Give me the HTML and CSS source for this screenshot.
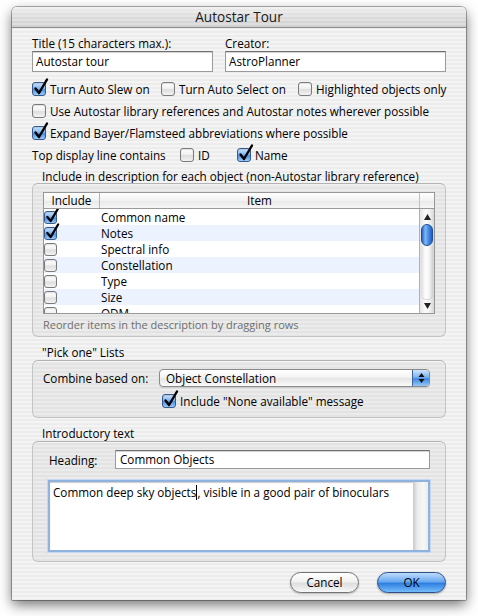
FILE: index.html
```html
<!DOCTYPE html>
<html>
<head>
<meta charset="utf-8">
<title>Autostar Tour</title>
<link rel="stylesheet" href="styles.css">
</head>
<body>
<div class="window">
  <div class="titlebar">Autostar Tour</div>
  <div class="content">
    <div class="fields">
      <div class="fcol">
        <div class="lbl">Title (15 characters max.):</div>
        <div class="textfield">Autostar tour</div>
      </div>
      <div class="fcol">
        <div class="lbl">Creator:</div>
        <div class="textfield">AstroPlanner</div>
      </div>
    </div>

    <div class="checkrow row1">
      <div class="citem"><span class="cb on"><svg class="tick" viewBox="0 0 16 18" width="16" height="18"><path d="M2.5 10.5 L6 15 L14 1.5" /></svg></span><span>Turn Auto Slew on</span></div>
      <div class="citem"><span class="cb"></span><span>Turn Auto Select on</span></div>
      <div class="citem"><span class="cb"></span><span>Highlighted objects only</span></div>
    </div>
    <div class="checkrow">
      <div class="citem"><span class="cb"></span><span>Use Autostar library references and Autostar notes wherever possible</span></div>
    </div>
    <div class="checkrow">
      <div class="citem"><span class="cb on"><svg class="tick" viewBox="0 0 16 18" width="16" height="18"><path d="M2.5 10.5 L6 15 L14 1.5" /></svg></span><span>Expand Bayer/Flamsteed abbreviations where possible</span></div>
    </div>
    <div class="checkrow row4">
      <div class="plain">Top display line contains</div>
      <div class="citem"><span class="cb"></span><span>ID</span></div>
      <div class="citem"><span class="cb on"><svg class="tick" viewBox="0 0 16 18" width="16" height="18"><path d="M2.5 10.5 L6 15 L14 1.5" /></svg></span><span>Name</span></div>
    </div>

    <div class="glabel first">Include in description for each object (non-Autostar library reference)</div>
    <div class="group g1">
      <div class="table">
        <div class="thead">
          <div class="th inc">Include</div>
          <div class="th item">Item</div>
          <div class="th corner"></div>
        </div>
        <div class="tbody">
          <div class="rows">
            <div class="tr"><span class="cell-cb"><span class="cb sm on"><svg class="tick" viewBox="0 0 16 18" width="15" height="17"><path d="M2.5 10.5 L6 15 L14 1.5" /></svg></span></span><span class="cell-txt">Common name</span></div>
            <div class="tr alt"><span class="cell-cb"><span class="cb sm on"><svg class="tick" viewBox="0 0 16 18" width="15" height="17"><path d="M2.5 10.5 L6 15 L14 1.5" /></svg></span></span><span class="cell-txt">Notes</span></div>
            <div class="tr"><span class="cell-cb"><span class="cb sm"></span></span><span class="cell-txt">Spectral info</span></div>
            <div class="tr alt"><span class="cell-cb"><span class="cb sm"></span></span><span class="cell-txt">Constellation</span></div>
            <div class="tr"><span class="cell-cb"><span class="cb sm"></span></span><span class="cell-txt">Type</span></div>
            <div class="tr alt"><span class="cell-cb"><span class="cb sm"></span></span><span class="cell-txt">Size</span></div>
            <div class="tr"><span class="cell-cb"><span class="cb sm"></span></span><span class="cell-txt">ODM</span></div>
          </div>
          <div class="vscroll">
            <div class="arrow up"><svg viewBox="0 0 7 6" width="7" height="6"><path d="M3.5 0 L7 6 L0 6 Z"/></svg></div>
            <div class="thumb"></div>
            <div class="track"></div>
            <div class="arrow down"><svg viewBox="0 0 7 6" width="7" height="6"><path d="M0 0 L7 0 L3.5 6 Z"/></svg></div>
          </div>
        </div>
      </div>
      <div class="hint">Reorder items in the description by dragging rows</div>
    </div>

    <div class="glabel">"Pick one" Lists</div>
    <div class="group g2">
      <div class="poprow">
        <div class="plbl">Combine based on:</div>
        <div class="popup">
          <div class="pval">Object Constellation</div>
          <div class="parrows"><svg viewBox="0 0 7 12" width="7" height="12"><path d="M3.5 1 L6.5 5 L0.5 5 Z M0.5 7 L6.5 7 L3.5 11 Z"/></svg></div>
        </div>
      </div>
      <div class="checkrow nonerow">
        <div class="citem"><span class="cb on"><svg class="tick" viewBox="0 0 16 18" width="16" height="18"><path d="M2.5 10.5 L6 15 L14 1.5" /></svg></span><span>Include "None available" message</span></div>
      </div>
    </div>

    <div class="glabel">Introductory text</div>
    <div class="group g3">
      <div class="headrow">
        <div class="hlbl">Heading:</div>
        <div class="textfield hfield">Common Objects</div>
      </div>
      <div class="textarea">
        <div class="tatext">Common deep sky objects<span class="caret"></span>, visible in a good pair of binoculars</div>
        <div class="tagutter"></div>
      </div>
    </div>

    <div class="buttons">
      <div class="btn cancel">Cancel</div>
      <div class="btn ok">OK</div>
    </div>
  </div>
</div>
</body>
</html>
```

FILE: styles.css
```css
* { box-sizing: border-box; }
html, body { margin: 0; padding: 0; }
body {
  background: #ffffff;
  width: 478px;
  height: 616px;
  overflow: hidden;
  font-family: "Open Sans", "Liberation Sans", sans-serif;
  font-size: 11.7px;
  color: #000;
}
.window {
  margin: 7px 0 0 12px;
  width: 454px;
  height: 593px;
  border-radius: 5px 5px 1px 1px;
  box-shadow: 0 5px 13px rgba(0,0,0,0.55), 0 0 0 1px rgba(0,0,0,0.3);
  background: repeating-linear-gradient(to bottom, #ececec 0 2px, #f4f4f4 2px 4px);
  display: flex;
  flex-direction: column;
  overflow: hidden;
}
.titlebar {
  height: 21px;
  flex: none;
  text-align: center;
  font-size: 13.6px;
  line-height: 20px;
  color: #1a1a1a;
  border-bottom: 1px solid #8d8d8d;
  background:
    repeating-linear-gradient(to bottom, rgba(255,255,255,0.25) 0 2px, rgba(255,255,255,0) 2px 4px),
    linear-gradient(to bottom, #ededed, #dadada 55%, #cfcfcf);
}
.content {
  padding: 8px 20px 0 20px;
  display: flex;
  flex-direction: column;
  flex: 1;
}
.fields {
  display: grid;
  grid-template-columns: 181px 221px;
  column-gap: 12px;
}
.lbl { line-height: 15px; height: 15px; }
.textfield {
  height: 21px;
  border: 1px solid #9b9b9b;
  border-top-color: #6f6f6f;
  background: #fff;
  box-shadow: inset 0 1px 1px rgba(0,0,0,0.18);
  padding-left: 3px;
  line-height: 19px;
}
.checkrow {
  display: flex;
  align-items: center;
  height: 22px;
}
.row1 { margin-top: 6px; display: grid; grid-template-columns: 129px 137px auto; }
.row4 { display: grid; grid-template-columns: 148px 57px auto; }
.citem { display: flex; align-items: center; white-space: nowrap; }
.cb {
  position: relative;
  flex: none;
  width: 14px;
  height: 14px;
  margin-right: 4px;
  border: 1px solid #7a7a7a;
  border-radius: 3px;
  background: linear-gradient(to bottom, #ffffff 0%, #f1f1f1 45%, #dedede 55%, #f3f3f3 100%);
  box-shadow: inset 0 1px 1px rgba(0,0,0,0.12);
}
.cb.on {
  border-color: #35598e;
  background: linear-gradient(to bottom, #cfe4fb 0%, #7fb5ee 45%, #4a91e2 55%, #9ccbf6 100%);
}
.cb.sm { width: 13px; height: 13px; margin-right: 0; }
.tick {
  position: absolute;
  left: 0px;
  top: -5px;
  overflow: visible;
}
.tick path {
  fill: none;
  stroke: #000;
  stroke-width: 2.4;
  stroke-linecap: round;
  stroke-linejoin: round;
}
.glabel {
  margin-left: 10px;
  line-height: 15px;
  height: 15px;
  margin-top: 8px;
}
.glabel.first { margin-top: 3px; }
.group {
  border: 1px solid #c3c3c3;
  border-top-color: #b3b3b3;
  border-radius: 6px;
  background: rgba(0,0,0,0.035);
  box-shadow: inset 0 1px 0 rgba(255,255,255,0.5);
  padding: 8px 10px 4px 10px;
}
.g1 { height: 154px; margin-top: -1px; }
.table {
  height: 122px;
  border: 1px solid #969696;
  background: #fff;
  display: flex;
  flex-direction: column;
}
.thead {
  display: grid;
  grid-template-columns: 56px 1fr 15px;
  height: 16px;
  flex: none;
  border-bottom: 1px solid #9a9a9a;
  background: linear-gradient(to bottom, #ffffff, #f2f2f2 50%, #e8e8e8 51%, #f6f6f6);
}
.th {
  line-height: 15px;
  text-align: center;
  font-size: 11.7px;
}
.th.inc { border-right: 1px solid #b5b5b5; }
.th.corner { border-left: 1px solid #c0c0c0; }
.tbody {
  flex: 1;
  display: grid;
  grid-template-columns: 1fr 15px;
  overflow: hidden;
}
.rows { overflow: hidden; }
.tr {
  height: 16px;
  display: grid;
  grid-template-columns: 56px 1fr;
  align-items: center;
}
.tr.alt { background: #edf3fe; }
.cell-cb { display: flex; align-items: center; padding-left: 0px; height: 16px; }
.cell-txt { line-height: 16px; padding-left: 1px; }
.vscroll {
  border-left: 1px solid #b0b0b0;
  display: flex;
  flex-direction: column;
  background: linear-gradient(to right, #e6e6e6, #fbfbfb 40%, #f0f0f0 70%, #d6d6d6);
}
.arrow {
  height: 14px;
  flex: none;
  display: flex;
  align-items: center;
  justify-content: center;
}
.arrow svg path { fill: #222; }
.arrow.up { height: 14px; padding-top: 2px; }
.thumb {
  flex: none;
  height: 22px;
  margin: 1px 1px 0 1px;
  border-radius: 6px;
  border: 1px solid #1e4f9a;
  background: linear-gradient(to right, #2b66c8, #7fb6f5 35%, #4e91e6 60%, #1d5ec4);
}
.track {
  flex: 1;
  margin: 0 1px;
  border-radius: 0 0 6px 6px;
  background: linear-gradient(to right, #dedede, #ffffff 40%, #f2f2f2 70%, #cfcfcf);
  box-shadow: 0 1px 1px rgba(0,0,0,0.15);
}
.arrow.down { height: 14px; }
.hint {
  margin-top: 4px;
  line-height: 14px;
  font-size: 11px;
  color: #6f6f6f;
}
.g2 { height: 58px; margin-top: 0; }
.poprow { display: flex; align-items: center; height: 18px; }
.plbl { width: 116px; flex: none; }
.popup {
  width: 271px;
  height: 18px;
  border: 1px solid #8b8b8b;
  border-radius: 4px;
  display: flex;
  overflow: hidden;
  background: linear-gradient(to bottom, #ffffff, #f4f4f4 45%, #e6e6e6 55%, #fbfbfb);
  box-shadow: 0 1px 1px rgba(0,0,0,0.12);
}
.pval { flex: 1; padding-left: 6px; line-height: 16px; }
.parrows {
  width: 17px;
  flex: none;
  display: flex;
  align-items: center;
  justify-content: center;
  border-left: 1px solid #39649e;
  background: linear-gradient(to bottom, #cfe4fb, #7db3ee 45%, #3f88e0 55%, #94c8f6);
}
.parrows svg path { fill: #111; }
.nonerow { margin-top: 3px; padding-left: 119px; }
.g3 { height: 121px; margin-top: 0; padding: 8px 0 0 0; }
.headrow { display: flex; align-items: center; height: 19px; }
.hlbl { width: 82px; padding-left: 16px; flex: none; }
.hfield { width: 315px; height: 19px; line-height: 17px; padding-left: 4px; }
.textarea {
  margin: 11px 0 0 15px;
  width: 382px;
  height: 72px;
  border: 2px solid #8fb2de;
  box-shadow: 0 0 0 1px #c4d7ef, inset 0 1px 1px rgba(0,0,0,0.2);
  background: #fff;
  display: flex;
}
.tatext { flex: 1; padding: 2px 0 0 3px; line-height: 16px; }
.caret {
  display: inline-block;
  width: 1px;
  height: 15px;
  background: #000;
  vertical-align: -3px;
}
.tagutter {
  width: 15px;
  flex: none;
  background: linear-gradient(to right, #c9c9c9, #ececec 30%, #f7f7f7 70%, #ececec);
}
.buttons {
  margin-top: 10px;
  display: flex;
  justify-content: flex-end;
  gap: 18px;
}
.btn {
  width: 69px;
  height: 21px;
  border-radius: 11px;
  text-align: center;
  line-height: 19px;
  font-size: 11.7px;
}
.btn.cancel {
  border: 1px solid #737373;
  background: linear-gradient(to bottom, #ffffff, #f2f2f2 45%, #dedede 55%, #f8f8f8);
  box-shadow: 0 1px 2px rgba(0,0,0,0.25);
}
.btn.ok {
  border: 1px solid #2c4f85;
  background: linear-gradient(to bottom, #bfdcfb 0%, #6aaaf0 45%, #2f80e2 55%, #74bcfa 100%);
  box-shadow: 0 1px 2px rgba(0,0,0,0.3);
}
```
